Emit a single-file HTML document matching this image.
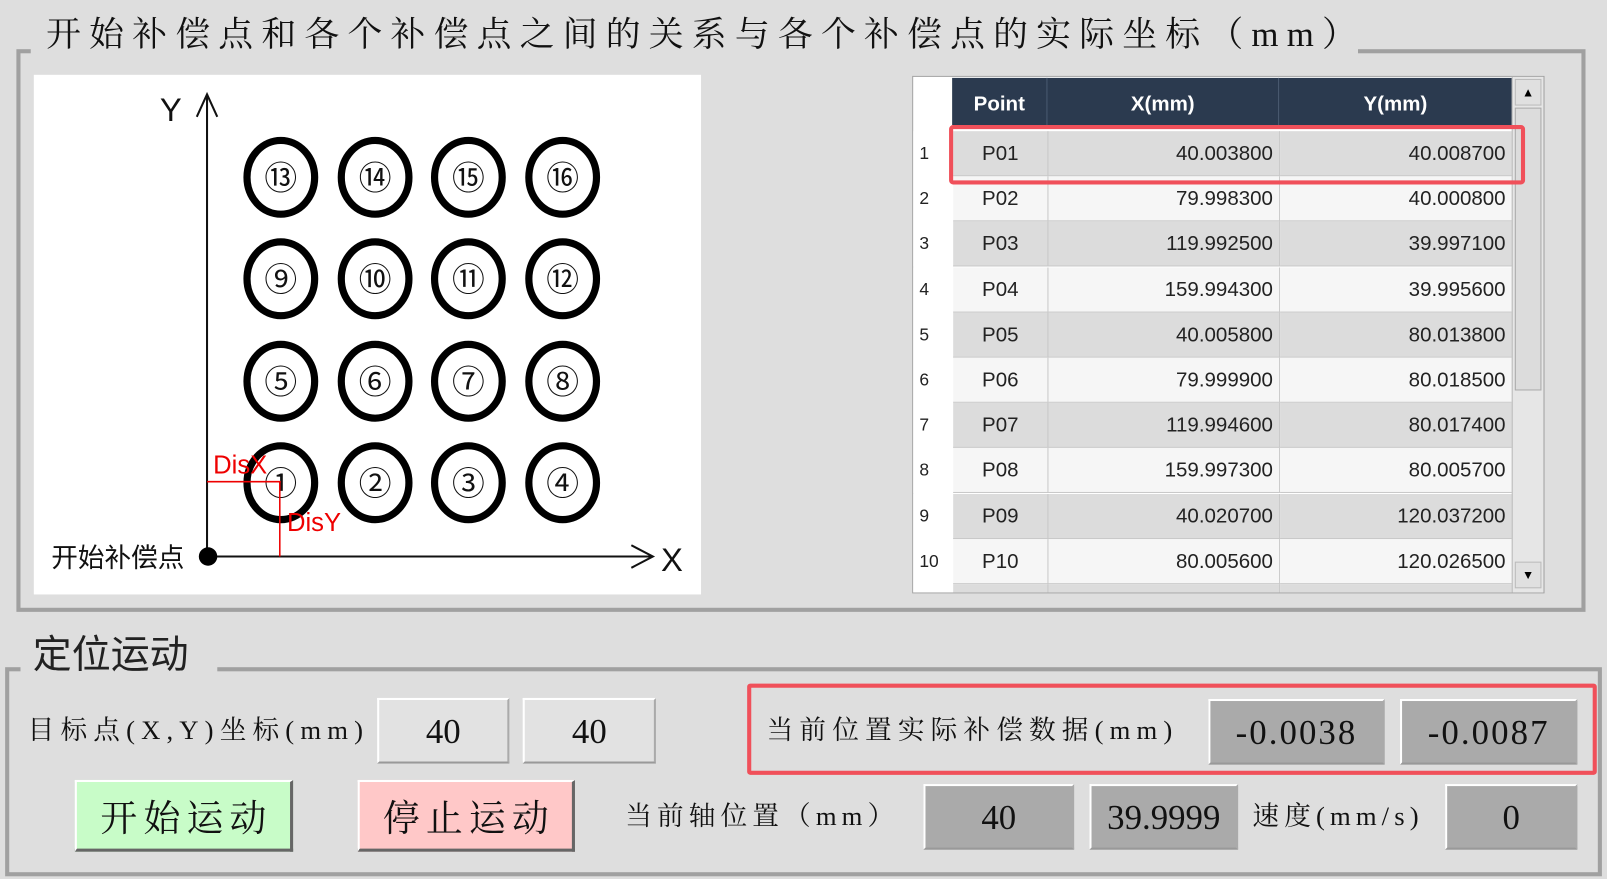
<!DOCTYPE html>
<html><head><meta charset="utf-8"><style>
*{margin:0;padding:0;box-sizing:border-box}
body{width:1607px;height:879px;background:#dedede;position:relative;overflow:hidden;font-family:"Liberation Sans","Noto Sans CJK SC",sans-serif}
#w{position:absolute;left:0;top:0;width:1568px;height:858px;transform:scale(1.0249);transform-origin:0 0}
.a{position:absolute}
.serif{font-family:"Liberation Serif","Noto Serif CJK SC",serif;color:#111}
.grp{position:absolute;border:4px solid #a0a0a0}
.tbl{position:absolute;left:890px;top:74px;width:617px;height:505px;background:#fff;border:1px solid #a0a0a0;overflow:hidden}
.row{position:absolute;left:0;height:44px;width:585px;font-size:20px;color:#222}
.row div{position:absolute;top:0;height:44px;line-height:44px;border-right:1px solid #c8c8c8;border-bottom:1px solid #c8c8c8}
.box{position:absolute;height:64px;font-family:"Liberation Serif","Noto Serif CJK SC",serif;font-size:34px;text-align:center;line-height:64px;color:#111;border-top:2px solid #fff;border-left:2px solid #fff;border-bottom:2px solid #999;border-right:2px solid #aaa}
.btn{position:absolute;height:70px;font-family:"Noto Serif CJK SC",serif;font-size:36px;text-align:center;line-height:68px;border-top:2px solid #fff;border-left:2px solid #fff;border-bottom:3px solid #666;border-right:3px solid #666;color:#111;letter-spacing:6px;padding-left:6px}
</style></head><body><div id="w">
<div class="grp" style="left:16px;top:48px;width:1531px;height:549px"></div>
<div class="a serif" style="left:30px;top:10px;width:1295px;height:50px;background:#dedede;font-size:34px;line-height:50px;padding-left:15px;letter-spacing:8px;white-space:nowrap">开始补偿点和各个补偿点之间的关系与各个补偿点的实际坐标（mm）</div>

<div class="a" style="left:33px;top:73px;width:651px;height:507px;background:#fff">
<svg width="651" height="507" viewBox="33 73 651 507" xmlns="http://www.w3.org/2000/svg">
<g stroke="#111" fill="none" stroke-width="2">
<line x1="202" y1="92" x2="202" y2="543"/><polyline points="192,114 202,92 212,114"/>
<line x1="202" y1="543" x2="636" y2="543"/><polyline points="616,532 637,543 616,554"/>
</g>
<circle cx="203" cy="543" r="9" fill="#000"/>
<g stroke="#000" stroke-width="7" fill="none">
<ellipse cx="274" cy="173" rx="33" ry="36"/><ellipse cx="366" cy="173" rx="33" ry="36"/><ellipse cx="457" cy="173" rx="33" ry="36"/><ellipse cx="549" cy="173" rx="33" ry="36"/>
<ellipse cx="274" cy="272" rx="33" ry="36"/><ellipse cx="366" cy="272" rx="33" ry="36"/><ellipse cx="457" cy="272" rx="33" ry="36"/><ellipse cx="549" cy="272" rx="33" ry="36"/>
<ellipse cx="274" cy="372" rx="33" ry="36"/><ellipse cx="366" cy="372" rx="33" ry="36"/><ellipse cx="457" cy="372" rx="33" ry="36"/><ellipse cx="549" cy="372" rx="33" ry="36"/>
<ellipse cx="274" cy="471" rx="33" ry="36"/><ellipse cx="366" cy="471" rx="33" ry="36"/><ellipse cx="457" cy="471" rx="33" ry="36"/><ellipse cx="549" cy="471" rx="33" ry="36"/>
</g>
<g font-family="Noto Sans CJK SC, DejaVu Sans, sans-serif" font-size="32" text-anchor="middle" fill="#111">
<text x="274" y="185">⑬</text><text x="366" y="185">⑭</text><text x="457" y="185">⑮</text><text x="549" y="185">⑯</text>
<text x="274" y="284">⑨</text><text x="366" y="284">⑩</text><text x="457" y="284">⑪</text><text x="549" y="284">⑫</text>
<text x="274" y="384">⑤</text><text x="366" y="384">⑥</text><text x="457" y="384">⑦</text><text x="549" y="384">⑧</text>
<text x="274" y="483">①</text><text x="366" y="483">②</text><text x="457" y="483">③</text><text x="549" y="483">④</text>
</g>
<g stroke="#e00" stroke-width="1.5"><line x1="202" y1="470" x2="274" y2="470"/><line x1="273" y1="470" x2="273" y2="543"/></g>
<g font-family="Liberation Sans, sans-serif" font-size="25" fill="#e00"><text x="208" y="462">DisX</text><text x="280" y="518">DisY</text></g>
<g font-family="Liberation Sans, sans-serif" font-size="32" fill="#111"><text x="156" y="118">Y</text><text x="645" y="557">X</text></g>
<text x="50" y="553" font-family="Noto Sans CJK SC, sans-serif" font-size="26" fill="#111">开始补偿点</text>
</svg></div>

<div class="tbl">
<div class="a" style="left:38px;top:1px;width:547px;height:46px;background:#2b3a4f;color:#fff;font-weight:bold;font-size:20px;line-height:52px">
<div class="a" style="left:0;width:93px;text-align:center;border-right:1px solid #4a5a70;height:46px">Point</div>
<div class="a" style="left:93px;width:226px;text-align:center;border-right:1px solid #4a5a70;height:46px">X(mm)</div>
<div class="a" style="left:319px;width:227px;text-align:center;height:46px">Y(mm)</div>
</div>
<div id="rows"></div>
<div class="a" style="left:584px;top:0;width:31px;height:505px;background:#e6e6e6;border-left:1px solid #bbb">
<div class="a" style="left:2px;top:2px;width:26px;height:26px;background:#e0e0e0;border:1px solid #bbb;font-size:12px;text-align:center;line-height:24px">▲</div>
<div class="a" style="left:2px;top:30px;width:26px;height:276px;background:#dcdcdc;border:1px solid #aaa"></div>
<div class="a" style="left:2px;top:473px;width:26px;height:26px;background:#e0e0e0;border:1px solid #bbb;font-size:12px;text-align:center;line-height:24px">▼</div>
</div>
</div>
<div class="a" style="left:926px;top:122px;width:562px;height:58px;border:4px solid #f0505a;border-radius:4px"></div>

<div class="grp" style="left:5px;top:651px;width:1558px;height:204px"></div>
<div class="a" style="left:20px;top:606px;width:192px;height:60px;background:#dedede;font-size:38px;line-height:60px;padding-left:12px;font-family:'Noto Sans CJK SC',sans-serif;color:#222">定位运动</div>

<div class="a serif" style="left:27px;top:694px;font-size:26px;line-height:38px;letter-spacing:6px;white-space:nowrap">目标点(X,Y)坐标(mm)</div>
<div class="box" style="left:368px;top:681px;width:129px;background:#e2e2e2">40</div>
<div class="box" style="left:510px;top:681px;width:130px;background:#e2e2e2">40</div>
<div class="a" style="left:729px;top:667px;width:829px;height:89px;border:4px solid #f0505a;border-radius:3px"></div>
<div class="a serif" style="left:748px;top:694px;font-size:26px;line-height:38px;letter-spacing:6px;white-space:nowrap">当前位置实际补偿数据(mm)</div>
<div class="box" style="left:1179px;top:682px;width:172px;background:#aaa;letter-spacing:2px">-0.0038</div>
<div class="box" style="left:1366px;top:682px;width:173px;background:#aaa;letter-spacing:2px">-0.0087</div>

<div class="btn" style="left:73px;top:761px;width:213px;background:#c8fcc8">开始运动</div>
<div class="btn" style="left:349px;top:761px;width:212px;background:#ffc8c8">停止运动</div>
<div class="a serif" style="left:610px;top:777px;font-size:26px;line-height:40px;letter-spacing:5px;white-space:nowrap">当前轴位置（mm）</div>
<div class="box" style="left:901px;top:765px;width:147px;background:#aaa">40</div>
<div class="box" style="left:1063px;top:765px;width:145px;background:#aaa">39.9999</div>
<div class="a serif" style="left:1222px;top:777px;font-size:26px;line-height:40px;letter-spacing:5px;white-space:nowrap">速度(mm/s)</div>
<div class="box" style="left:1410px;top:765px;width:129px;background:#aaa">0</div>
</div>
<script>
var d=[["P01","40.003800","40.008700"],["P02","79.998300","40.000800"],["P03","119.992500","39.997100"],["P04","159.994300","39.995600"],["P05","40.005800","80.013800"],["P06","79.999900","80.018500"],["P07","119.994600","80.017400"],["P08","159.997300","80.005700"],["P09","40.020700","120.037200"],["P10","80.005600","120.026500"],["","",""]];
var h="";
for(var i=0;i<d.length;i++){var t=53+i*44.2,bg=(i%2==0)?"#dcdcdc":"#f6f6f6";
h+='<div class="row" style="top:'+t+'px">'+
'<div style="left:0;width:39px;background:#fff;border:none;font-size:17px;padding-left:6px">'+(i<10?i+1:"")+'</div>'+
'<div style="left:39px;width:93px;background:'+bg+';text-align:center">'+d[i][0]+'</div>'+
'<div style="left:132px;width:226px;background:'+bg+';text-align:right;padding-right:6px">'+d[i][1]+'</div>'+
'<div style="left:358px;width:227px;background:'+bg+';text-align:right;padding-right:6px">'+d[i][2]+'</div></div>';}
document.getElementById("rows").innerHTML=h;
</script>
</body></html>
